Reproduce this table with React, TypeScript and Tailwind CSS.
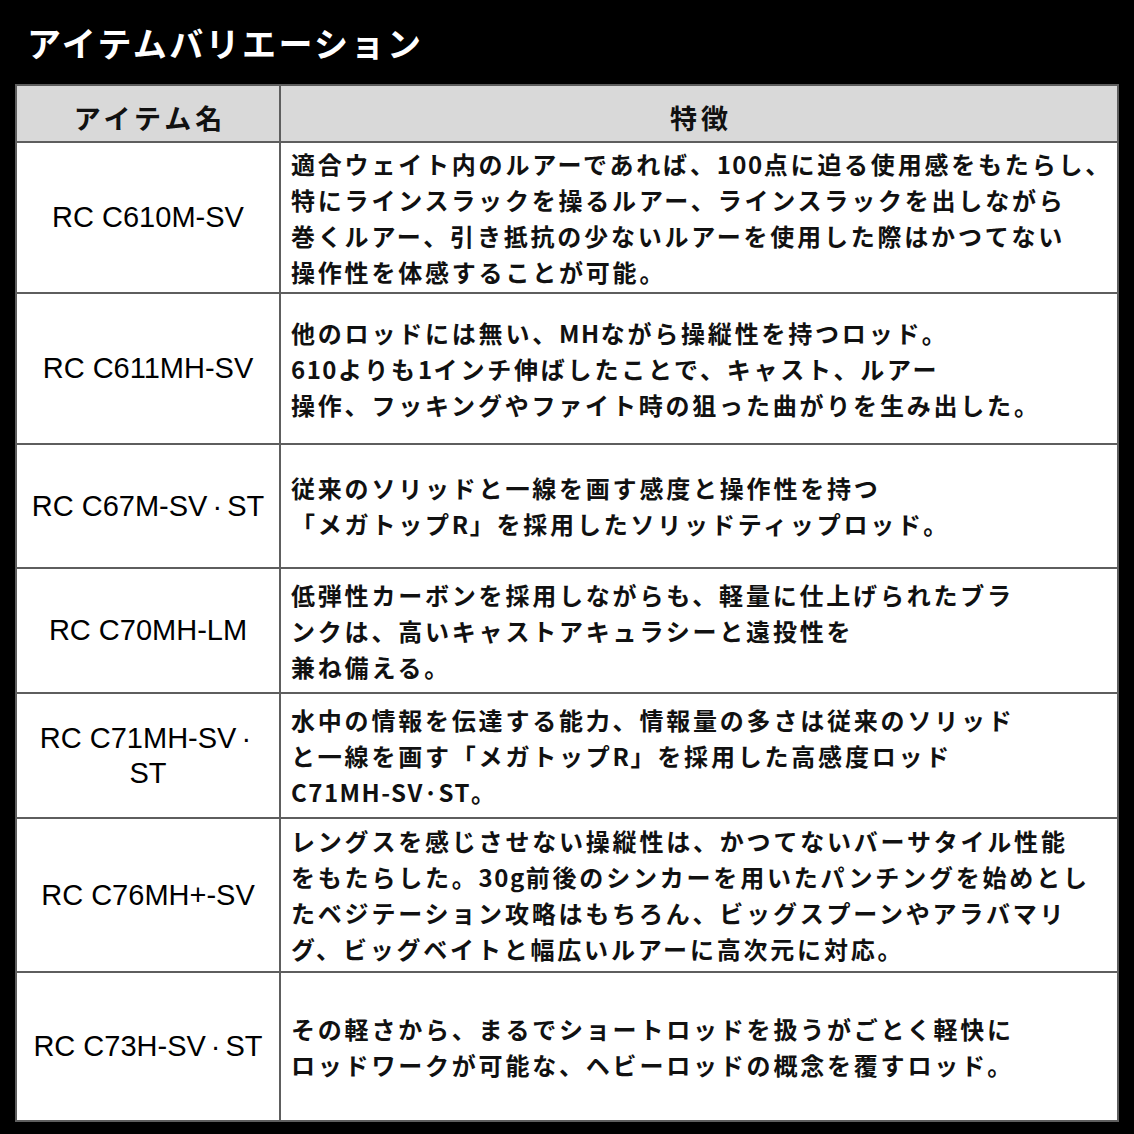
import { Fragment } from 'react';

type Row = { name: string[]; lines: string[]; h: string };

const rows: Row[] = [
  {
    name: ['RC C610M-SV'],
    h: 'h-[151px]',
    lines: [
      '適合ウェイト内のルアーであれば、100点に迫る使用感をもたらし、',
      '特にラインスラックを操るルアー、ラインスラックを出しながら',
      '巻くルアー、引き抵抗の少ないルアーを使用した際はかつてない',
      '操作性を体感することが可能。',
    ],
  },
  {
    name: ['RC C611MH-SV'],
    h: 'h-[151px]',
    lines: [
      '他のロッドには無い、MHながら操縦性を持つロッド。',
      '610よりも1インチ伸ばしたことで、キャスト、ルアー',
      '操作、フッキングやファイト時の狙った曲がりを生み出した。',
    ],
  },
  {
    name: ['RC C67M-SV·ST'],
    h: 'h-[124px]',
    lines: ['従来のソリッドと一線を画す感度と操作性を持つ', '「メガトップR」を採用したソリッドティップロッド。'],
  },
  {
    name: ['RC C70MH-LM'],
    h: 'h-[125px]',
    lines: [
      '低弾性カーボンを採用しながらも、軽量に仕上げられたブラ',
      'ンクは、高いキャストアキュラシーと遠投性を',
      '兼ね備える。',
    ],
  },
  {
    name: ['RC C71MH-SV·', 'ST'],
    h: 'h-[125px]',
    lines: [
      '水中の情報を伝達する能力、情報量の多さは従来のソリッド',
      'と一線を画す「メガトップR」を採用した高感度ロッド',
      'C71MH-SV·ST。',
    ],
  },
  {
    name: ['RC C76MH+-SV'],
    h: 'h-[154px]',
    lines: [
      'レングスを感じさせない操縦性は、かつてないバーサタイル性能',
      'をもたらした。30g前後のシンカーを用いたパンチングを始めとし',
      'たベジテーション攻略はもちろん、ビッグスプーンやアラバマリ',
      'グ、ビッグベイトと幅広いルアーに高次元に対応。',
    ],
  },
  {
    name: ['RC C73H-SV·ST'],
    h: 'h-[147px]',
    lines: ['その軽さから、まるでショートロッドを扱うがごとく軽快に', 'ロッドワークが可能な、ヘビーロッドの概念を覆すロッド。'],
  },
];

// latin runs are set without the wide tracking of the kana
function Line({ text }: { text: string }) {
  const parts = text.split(/([A-Za-z0-9+\-·]+)/);
  return (
    <div className="whitespace-nowrap">
      {parts.map((p, i) =>
        /^[A-Za-z0-9+\-·]+$/.test(p) ? (
          <span key={i} className="tracking-[1.5px]">{p}</span>
        ) : (
          <Fragment key={i}>{p}</Fragment>
        ),
      )}
    </div>
  );
}

// the middle dot in the model names sits with some air on each side
function ModelName({ text }: { text: string }) {
  const parts = text.split('·');
  return (
    <div className="whitespace-nowrap">
      {parts.map((p, i) => (
        <Fragment key={i}>
          {i > 0 && <span className="px-[5px]">·</span>}
          {p}
        </Fragment>
      ))}
    </div>
  );
}

export default function App() {
  return (
    <div className="w-[1134px] h-[1134px] bg-black overflow-hidden">
      <div className="h-[84px] pl-[27px] pt-[26px]">
        <h1 className="text-white text-[34px] leading-none font-bold tracking-[2.4px] font-['Noto_Sans_CJK_JP',sans-serif]">
          アイテムバリエーション
        </h1>
      </div>

      <div className="mx-[15px] w-[1104px] border-2 border-[#5e5e5e] bg-white">
        <div className="grid grid-cols-[264px_1fr] h-[57px] border-b-2 border-[#5e5e5e] bg-[#d9d9d9] font-['Noto_Sans_CJK_JP',sans-serif] font-bold text-[27px] tracking-[4px] text-[#111]">
          <div className="border-r-2 border-[#5e5e5e] flex items-center justify-center pt-[10px] pl-[4px]">アイテム名</div>
          <div className="flex items-center justify-center pt-[10px] pl-[4px]">特徴</div>
        </div>

        {rows.map((r, i) => (
          <div
            key={r.name.join('')}
            className={`grid grid-cols-[264px_1fr] ${r.h} ${i < rows.length - 1 ? 'border-b-2 border-[#5e5e5e]' : ''}`}
          >
            <div className="border-r-2 border-[#5e5e5e] flex flex-col items-center justify-center text-center font-['Liberation_Sans',Arial,sans-serif] text-[29px] leading-[35px] text-black">
              {r.name.map((n) => (
                <ModelName key={n} text={n} />
              ))}
            </div>
            <div className="pl-[10px] flex flex-col justify-center font-['Noto_Sans_CJK_JP',sans-serif] font-bold text-[24px] leading-[36px] tracking-[2.8px] text-[#111]">
              {r.lines.map((l) => (
                <Line key={l} text={l} />
              ))}
            </div>
          </div>
        ))}
      </div>
    </div>
  );
}
